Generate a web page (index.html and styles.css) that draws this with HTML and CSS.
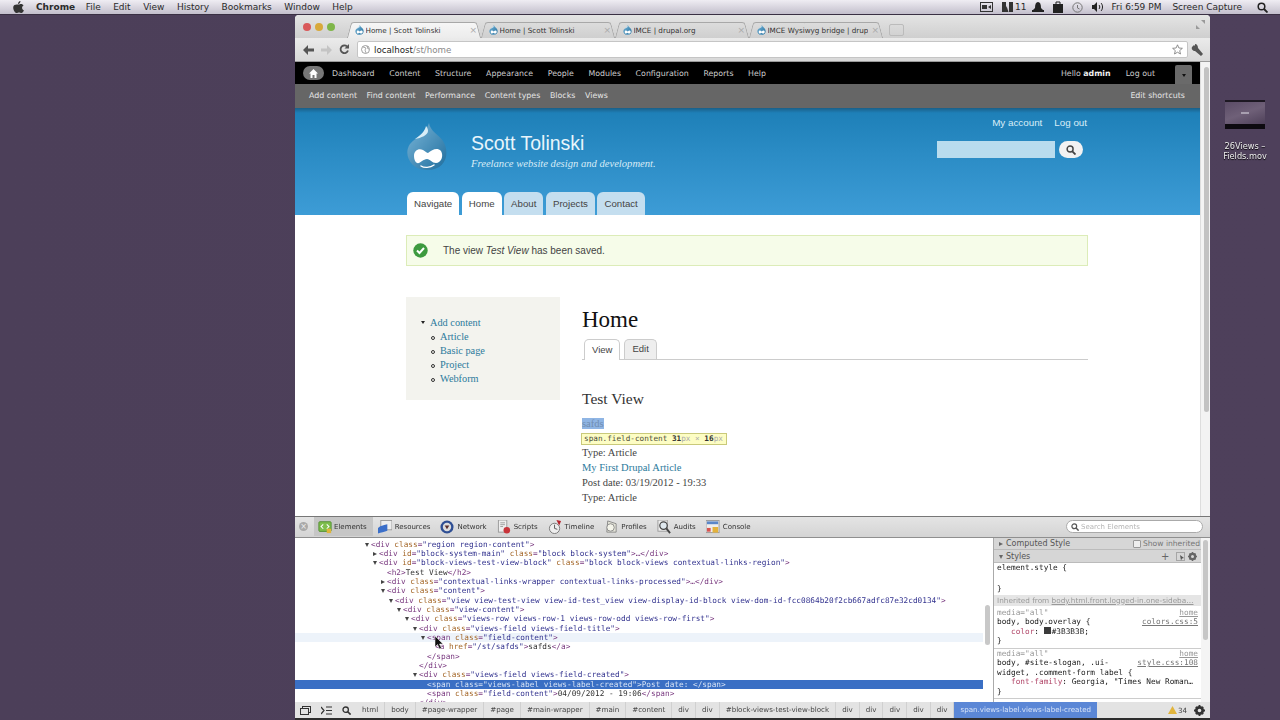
FILE: index.html
```html
<!DOCTYPE html>
<html lang="en">
<head>
  <meta charset="UTF-8" />
  <title>Home | Scott Tolinski</title>
  <link rel="stylesheet" href="styles.css">
</head>
<body>

<svg class="defs" width="0" height="0">
  <defs>
    <linearGradient id="dropFill" x1="0" y1="0" x2="1" y2="1">
      <stop offset="0" stop-color="#7bb6d8"/>
      <stop offset="1" stop-color="#1f6e9e"/>
    </linearGradient>
    <symbol id="drop" viewBox="0 0 42 47">
      <path d="M23 0C24 8 33 12 37 18C44 29 41 47 21 47C4 47-3 31 4 21C10 14 20 10 23 0Z" fill="url(#dropFill)"/>
      <path d="M20 3C19 8 15 12 9 16C15 15 22 12 22 8C22 6 21 4 20 3Z" fill="#d8edf7"/>
      <path d="M8 33C8 27 13 25 17 27C20 29 21 30 22 30C26 27 31 24 35 28C38 33 35 40 30 40C26 40 24 36 21 36C17 36 14 41 11 40C9 39 8 36 8 33Z" fill="#fff"/>
      <path d="M15 43C18 45 24 45 28 42" fill="none" stroke="#fff" stroke-width="1.4" stroke-linecap="round"/>
    </symbol>
  </defs>
</svg>

<div class="menubar">
  <div class="menu-left">
    <svg class="apple" width="11" height="12" viewBox="0 0 22 24"><path d="M15 0c0 3-2 6-5 6 0-3 2-6 5-6zM11 7c2 0 3-1 5-1 2 0 4 1 5 3-4 2-4 8 1 10-2 3-3 5-5 5s-3-1-5-1-3 1-5 1C3 24-3 12 3 8c3-2 6-1 8-1z" fill="#333"/></svg>
    <b>Chrome</b>
    <span>File</span>
    <span>Edit</span>
    <span>View</span>
    <span>History</span>
    <span>Bookmarks</span>
    <span>Window</span>
    <span>Help</span>
  </div>
  <div class="menu-right">
    <svg width="13" height="10" viewBox="0 0 13 10"><rect x=".5" y=".5" width="12" height="9" fill="none" stroke="#333"/><rect x="2" y="3" width="5" height="4" fill="#333"/><path d="M8 5l3-2v4z" fill="#333"/></svg>
    <span class="adobe"><svg width="11" height="10" viewBox="0 0 11 10"><path d="M0 0h4v10H0zM7 0h4v10H7zM4.500 4l2 6H3z" fill="#333"/></svg>11</span>
    <svg width="12" height="10" viewBox="0 0 12 10"><path d="M3 6C3 2 4 0 6 0s3 2 3 6l2 2H1z" fill="#222"/><rect x="0" y="8" width="12" height="2" fill="#222"/></svg>
    <svg width="10" height="12" viewBox="0 0 10 12"><rect x="0" y="3" width="10" height="9" fill="#222"/><path d="M3 3V1h4v2" fill="none" stroke="#222"/></svg>
    <svg width="11" height="11" viewBox="0 0 11 11"><circle cx="5.500" cy="5.500" r="4.700" fill="none" stroke="#777"/><path d="M5.500 3v3l2 1" fill="none" stroke="#777"/></svg>
    <svg width="12" height="10" viewBox="0 0 12 10"><path d="M0 3h2l3-3v10L2 7H0z" fill="#222"/><path d="M7 3c1 1 1 3 0 4M9 1c2 2 2 6 0 8" fill="none" stroke="#222"/></svg>
    <span class="clock">Fri 6:59 PM</span>
    <span class="capture">Screen Capture</span>
    <svg width="11" height="11" viewBox="0 0 11 11"><circle cx="4.500" cy="4.500" r="3.300" fill="none" stroke="#222" stroke-width="1.500"/><path d="M7 7l3.500 3.500" stroke="#222" stroke-width="1.800"/></svg>
  </div>
</div>

<div class="desktop-file">
  <div class="file-thumb"><div class="file-dot"></div></div>
  <div class="file-name">26Views –<br>Fields.mov</div>
</div>

<div class="window">
  <div class="tabstrip">
    <div class="lights">
      <i class="light red"></i><i class="light yellow"></i><i class="light green"></i>
    </div>
    <div class="tab tab-active"><svg class="favicon"><use href="#drop"/></svg><span class="tab-title">Home | Scott Tolinski</span><span class="tab-x">×</span></div>
    <div class="tab"><svg class="favicon"><use href="#drop"/></svg><span class="tab-title">Home | Scott Tolinski</span><span class="tab-x">×</span></div>
    <div class="tab"><svg class="favicon"><use href="#drop"/></svg><span class="tab-title">IMCE | drupal.org</span><span class="tab-x">×</span></div>
    <div class="tab"><svg class="favicon"><use href="#drop"/></svg><span class="tab-title">IMCE Wysiwyg bridge | drup</span><span class="tab-x">×</span></div>
    <div class="newtab"></div>
    <svg class="fullscreen" width="9" height="9" viewBox="0 0 9 9"><path d="M5 0h4v4zM0 5v4h4z" fill="#9a9a9a"/></svg>
  </div>

  <div class="urlbar">
    <svg class="nav-ico" width="11" height="10" viewBox="0 0 11 10"><path d="M5 0L0 5l5 5V6.500h6v-3H5z" fill="#555"/></svg>
    <svg class="nav-ico" width="11" height="10" viewBox="0 0 11 10"><path d="M6 0l5 5-5 5V6.500H0v-3h6z" fill="#c4c4c4"/></svg>
    <svg class="nav-ico" width="11" height="11" viewBox="0 0 11 11"><path d="M9 6.500A3.800 3.800 0 1 1 8 2.500" fill="none" stroke="#555" stroke-width="1.800"/><path d="M10 0v4.500H5.500z" fill="#555"/></svg>
    <div class="omnibox">
      <svg width="9" height="9" viewBox="0 0 9 9"><circle cx="4.500" cy="4.500" r="4" fill="none" stroke="#888" stroke-width=".8"/><path d="M2 2l3 1-1 2 1 3M6 1l1 3 1 0" fill="none" stroke="#888" stroke-width=".7"/></svg>
      <span class="url"><b>localhost</b>/st/home</span>
    </div>
    <svg class="star" width="11" height="11" viewBox="0 0 11 11"><path d="M5.500.8l1.400 3.200 3.500.3-2.700 2.300.8 3.400-3-1.800-3 1.800.8-3.400L.6 4.300l3.500-.3z" fill="#fff" stroke="#777" stroke-width=".8"/></svg>
    <svg class="wrench" width="12" height="12" viewBox="0 0 12 12"><path d="M1 3l2-2 1 1V0c2 0 3 2 3 4l5 6-2 2-6-5C2 7 0 5 1 3z" fill="#555"/></svg>
  </div>

  <div class="viewport">
    <div class="page">
      <div class="admin-bar">
        <div class="admin-left">
          <span class="home-btn"><svg width="9" height="9" viewBox="0 0 9 9"><path d="M4.500 0L9 4.500H7.500V9H5.500V6h-2v3h-2V4.500H0z" fill="#fff"/></svg></span>
          <a>Dashboard</a><a>Content</a><a>Structure</a><a>Appearance</a><a>People</a><a>Modules</a><a>Configuration</a><a>Reports</a><a>Help</a>
        </div>
        <div class="admin-right">
          <span>Hello <b>admin</b></span><a>Log out</a>
          <span class="toggle"><i></i></span>
        </div>
      </div>
      <div class="shortcuts">
        <div class="short-left"><a>Add content</a><a>Find content</a><a>Performance</a><a>Content types</a><a>Blocks</a><a>Views</a></div>
        <a>Edit shortcuts</a>
      </div>

      <div class="site-header">
        <div class="wrap header-inner">
          <div class="header-top">
            <div class="branding">
              <svg class="logo" width="42" height="47"><use href="#drop"/></svg>
              <div class="site-text">
                <div class="site-name">Scott Tolinski</div>
                <div class="site-slogan">Freelance website design and development.</div>
              </div>
            </div>
            <div class="header-right">
              <div class="secondary"><a>My account</a><a>Log out</a></div>
              <div class="search">
                <div class="search-input"></div>
                <div class="search-btn"><svg width="10" height="10" viewBox="0 0 11 11"><circle cx="4.500" cy="4.500" r="3.300" fill="none" stroke="#444" stroke-width="1.600"/><path d="M7 7l3.500 3.500" stroke="#444" stroke-width="2"/></svg></div>
              </div>
            </div>
          </div>
          <div class="main-menu">
            <a class="on">Navigate</a><a class="on">Home</a><a>About</a><a>Projects</a><a>Contact</a>
          </div>
        </div>
      </div>

      <div class="wrap">
        <div class="status">
          <svg width="15" height="15" viewBox="0 0 15 15"><circle cx="7.500" cy="7.500" r="7.200" fill="#3d9a3f"/><path d="M4 7.500l2.500 2.500 4.500-5" fill="none" stroke="#fff" stroke-width="2"/></svg>
          <span>The view <em>Test View</em> has been saved.</span>
        </div>
        <div class="columns">
          <div class="sidebar">
            <ul class="side-menu">
              <li><a>Add content</a>
                <ul>
                  <li><a>Article</a></li>
                  <li><a>Basic page</a></li>
                  <li><a>Project</a></li>
                  <li><a>Webform</a></li>
                </ul>
              </li>
            </ul>
          </div>
          <div class="content">
            <h1>Home</h1>
            <div class="local-tabs"><a class="on">View</a><a>Edit</a></div>
            <h2>Test View</h2>
            <div class="rows">
              <div class="row-hl"><a class="hl">safds</a></div>
              <div class="inspect-tip">span.field-content <b>31</b><i>px × </i><b>16</b><i>px</i></div>
              <div>&nbsp;</div>
              <div>Type: Article</div>
              <div><a>My First Drupal Article</a></div>
              <div>Post date: 03/19/2012 - 19:33</div>
              <div>Type: Article</div>
            </div>
          </div>
        </div>
      </div>
    </div>
    <div class="page-scroll"><div class="page-thumb"></div></div>
  </div>

  <div class="devtools">
    <div class="dt-toolbar">
      <span class="dt-close">×</span>
      <div class="dt-tab sel"><svg viewBox="0 0 16 14"><rect x="1" y="1" width="14" height="11" rx="1" fill="#7fbf4d" stroke="#4c8a2c"/><path d="M6 4L3.500 6.500 6 9M10 4l2.500 2.500L10 9" fill="none" stroke="#fff" stroke-width="1.200"/><rect x="10" y="9" width="5" height="5" fill="#e0b53a"/></svg><span>Elements</span></div>
      <div class="dt-tab"><svg viewBox="0 0 15 14"><rect x="3" y="0" width="12" height="10" fill="#eee" stroke="#999"/><path d="M0 8c3-3 7-3 10-4v7c-3 1-7 2-10 3z" fill="#3b6fc9"/></svg><span>Resources</span></div>
      <div class="dt-tab"><svg viewBox="0 0 15 15"><circle cx="7.500" cy="7.500" r="7" fill="#2f4f94"/><circle cx="7.500" cy="7.500" r="4.500" fill="#ddd"/><path d="M5 6h5l-2.500 4z" fill="#5a2f2f"/></svg><span>Network</span></div>
      <div class="dt-tab"><svg viewBox="0 0 14 15"><rect x="1" y="0" width="9" height="13" fill="#eee" stroke="#999"/><path d="M3 3h5M3 5h5M3 7h3" stroke="#888" stroke-width=".8"/><circle cx="10" cy="11" r="3.500" fill="#c8343a"/></svg><span>Scripts</span></div>
      <div class="dt-tab"><svg viewBox="0 0 15 15"><circle cx="7" cy="9" r="5.500" fill="#eee" stroke="#777"/><path d="M7 5v4l3 1" fill="none" stroke="#555"/><path d="M9 0l5 1-2 5z" fill="#b5232c"/></svg><span>Timeline</span></div>
      <div class="dt-tab"><svg viewBox="0 0 15 15"><path d="M4 1l9 3v9H3z" fill="#e6e6da" stroke="#888"/><circle cx="7" cy="8" r="4" fill="#f4f4ea" stroke="#888"/></svg><span>Profiles</span></div>
      <div class="dt-tab"><svg viewBox="0 0 15 15"><rect x="1" y="0" width="10" height="12" fill="#eee" stroke="#999"/><circle cx="7" cy="6" r="4" fill="#dfe8ee" stroke="#444" stroke-width="1.300"/><path d="M10 9l4 5" stroke="#444" stroke-width="2"/></svg><span>Audits</span></div>
      <div class="dt-tab"><svg viewBox="0 0 15 14"><rect x="0" y="0" width="14" height="13" fill="#eee" stroke="#999"/><rect x="1" y="1" width="12" height="3" fill="#5a86c8"/><rect x="7" y="7" width="6" height="6" fill="#e3b23c"/><rect x="1" y="8" width="4" height="4" fill="#d9534f"/></svg><span>Console</span></div>
      <div class="dt-search"><svg width="8" height="8" viewBox="0 0 11 11"><circle cx="4.500" cy="4.500" r="3.300" fill="none" stroke="#555" stroke-width="1.600"/><path d="M7 7l3.500 3.500" stroke="#555" stroke-width="2"/></svg><span>Search Elements</span></div>
    </div>

    <div class="dt-body">
      <div class="dom-tree">
        <div class="line l0 open"><u>&lt;div</u> <s>class</s><u>=</u><q>"region region-content"</q><u>&gt;</u></div>
        <div class="line l1 shut"><u>&lt;div</u> <s>id</s><u>=</u><q>"block-system-main"</q> <s>class</s><u>=</u><q>"block block-system"</q><u>&gt;…&lt;/div&gt;</u></div>
        <div class="line l1 open"><u>&lt;div</u> <s>id</s><u>=</u><q>"block-views-test-view-block"</q> <s>class</s><u>=</u><q>"block block-views contextual-links-region"</q><u>&gt;</u></div>
        <div class="line l2"><u>&lt;h2&gt;</u>Test View<u>&lt;/h2&gt;</u></div>
        <div class="line l2 shut"><u>&lt;div</u> <s>class</s><u>=</u><q>"contextual-links-wrapper contextual-links-processed"</q><u>&gt;…&lt;/div&gt;</u></div>
        <div class="line l2 open"><u>&lt;div</u> <s>class</s><u>=</u><q>"content"</q><u>&gt;</u></div>
        <div class="line l3 open"><u>&lt;div</u> <s>class</s><u>=</u><q>"view view-test-view view-id-test_view view-display-id-block view-dom-id-fcc0864b20f2cb667adfc87e32cd0134"</q><u>&gt;</u></div>
        <div class="line l4 open"><u>&lt;div</u> <s>class</s><u>=</u><q>"view-content"</q><u>&gt;</u></div>
        <div class="line l5 open"><u>&lt;div</u> <s>class</s><u>=</u><q>"views-row views-row-1 views-row-odd views-row-first"</q><u>&gt;</u></div>
        <div class="line l6 open"><u>&lt;div</u> <s>class</s><u>=</u><q>"views-field views-field-title"</q><u>&gt;</u></div>
        <div class="line l7 open hover"><u>&lt;span</u> <s>class</s><u>=</u><q>"field-content"</q><u>&gt;</u></div>
        <div class="line l8"><u>&lt;a</u> <s>href</s><u>=</u><q>"/st/safds"</q><u>&gt;</u>safds<u>&lt;/a&gt;</u></div>
        <div class="line l7"><u>&lt;/span&gt;</u></div>
        <div class="line l6"><u>&lt;/div&gt;</u></div>
        <div class="line l6 open"><u>&lt;div</u> <s>class</s><u>=</u><q>"views-field views-field-created"</q><u>&gt;</u></div>
        <div class="line l7 selected"><u>&lt;span</u> <s>class</s><u>=</u><q>"views-label views-label-created"</q><u>&gt;</u>Post date: <u>&lt;/span&gt;</u></div>
        <div class="line l7"><u>&lt;span</u> <s>class</s><u>=</u><q>"field-content"</q><u>&gt;</u>04/09/2012 - 19:06<u>&lt;/span&gt;</u></div>
        <div class="line l6"><u>&lt;/div&gt;</u></div>
        <svg class="cursor" width="9" height="13" viewBox="0 0 9 13"><path d="M0 0v11l2.500-2.500L4.500 13l2-1-2-4H8z" fill="#111" stroke="#fff" stroke-width=".5"/></svg>
      </div>
      <div class="tree-scroll"><div class="tree-thumb"></div></div>
      <div class="styles-pane">
        <div class="pane-head computed"><span class="arrow-r"></span>Computed Style<label><i></i>Show inherited</label></div>
        <div class="pane-head stylesh"><span class="arrow-d"></span>Styles<span class="head-tools">+ &nbsp;<svg width="9" height="9" viewBox="0 0 9 9"><rect x=".5" y=".5" width="8" height="8" fill="none" stroke="#777" stroke-dasharray="1 1"/><path d="M4 3l4 3-2 .5-1 2z" fill="#555"/></svg> &nbsp;<svg width="9" height="9" viewBox="0 0 24 24"><circle cx="12" cy="12" r="7" fill="none" stroke="#666" stroke-width="6"/><path d="M12 0v5M12 19v5M0 12h5M19 12h5M4 4l3 3M17 17l3 3M20 4l-3 3M7 17l-3 3" stroke="#666" stroke-width="4"/></svg></span></div>
        <div class="rule first">
          <div class="sel-line">element.style {</div>
          <div>&nbsp;</div>
          <div>}</div>
        </div>
        <div class="inherited">Inherited from <span>body.html.front.logged-in.one-sideba…</span></div>
        <div class="rule">
          <div class="media"><span>media="all"</span><span class="src-link">home</span></div>
          <div class="sel-line"><span>body, body.overlay {</span><span class="src-link">colors.css:5</span></div>
          <div class="decl"><s>color</s>: <i class="swatch"></i>#3B3B3B;</div>
          <div>}</div>
        </div>
        <div class="rule">
          <div class="media"><span>media="all"</span><span class="src-link">home</span></div>
          <div class="sel-line"><span>body, #site-slogan, .ui-</span><span class="src-link">style.css:108</span></div>
          <div>widget, .comment-form label {</div>
          <div class="decl"><s>font-family</s>: Georgia, "Times New Roman…</div>
          <div>}</div>
        </div>
      </div>
      <div class="pane-scroll"><div class="pane-thumb"></div></div>
    </div>

    <div class="crumbs">
      <svg class="crumb-ico" width="11" height="9" viewBox="0 0 11 9"><rect x="2.500" y=".5" width="8" height="6" fill="none" stroke="#333"/><rect x=".5" y="2.500" width="8" height="6" fill="#e3e3e3" stroke="#333"/></svg>
      <svg class="crumb-ico" width="11" height="9" viewBox="0 0 11 9"><path d="M0 1l3 3.500L0 8M5 1h6M5 4.500h6M5 8h6" fill="none" stroke="#333" stroke-width="1.200"/></svg>
      <svg class="crumb-ico" width="9" height="9" viewBox="0 0 11 11"><circle cx="4.500" cy="4.500" r="3.300" fill="none" stroke="#333" stroke-width="1.600"/><path d="M7 7l3.500 3.500" stroke="#333" stroke-width="2"/></svg>
      <div class="crumb-list">
        <span>html</span><span>body</span><span>#page-wrapper</span><span>#page</span><span>#main-wrapper</span><span>#main</span><span>#content</span><span>div</span><span>div</span><span>#block-views-test-view-block</span><span>div</span><span>div</span><span>div</span><span>div</span><span>div</span><span class="cur">span.views-label.views-label-created</span>
      </div>
      <div class="crumb-end">
        <svg width="9" height="8" viewBox="0 0 9 8"><path d="M4.500 0L9 8H0z" fill="#e2b53c"/></svg><span>34</span>
        <svg class="gear" width="11" height="11" viewBox="0 0 24 24"><circle cx="12" cy="12" r="7" fill="none" stroke="#333" stroke-width="6"/><path d="M12 0v5M12 19v5M0 12h5M19 12h5M4 4l3 3M17 17l3 3M20 4l-3 3M7 17l-3 3" stroke="#333" stroke-width="4"/></svg>
      </div>
    </div>
  </div>
</div>

</body>
</html>
```

FILE: styles.css
```css
html, body {
  margin: 0;
  height: 720px;
  overflow: hidden;
}

body {
  position: relative;
  background: linear-gradient(90deg, #4c3f59, #4e405b);
  font-family: "DejaVu Sans", sans-serif;
  filter: blur(0.4px);
}

.defs {
  position: absolute;
}

a {
  cursor: pointer;
}

/* mac menu bar */
.menubar {
  height: 14px;
  display: flex;
  justify-content: space-between;
  align-items: center;
  background: linear-gradient(#efedf3, #c3bfcc);
  border-bottom: 1px solid #3a3044;
  font-size: 9px;
  color: #2a2a2a;
}

.menu-left {
  display: flex;
  align-items: center;
  padding-left: 13px;
}

.menu-left b {
  margin-left: 12px;
  margin-right: 10.5px;
}

.menu-left span {
  margin-right: 12.5px;
}

.apple {
  flex: none;
}

.menu-right {
  display: flex;
  align-items: center;
  gap: 9px;
  padding-right: 12px;
}

.adobe {
  display: flex;
  align-items: center;
  gap: 2px;
  margin-right: -4px;
}

.clock {
  margin-left: -1px;
}

.capture {
  margin: 0 6px 0 2px;
}

/* desktop */
.desktop-file {
  position: absolute;
  left: 1215px;
  top: 100px;
  width: 60px;
  text-align: center;
  color: #eee;
  font-size: 8.2px;
  line-height: 10px;
  text-shadow: 0 1px 1px #000;
}

.file-thumb {
  width: 40px;
  height: 29px;
  margin: 0 auto 12px;
  box-sizing: border-box;
  background: linear-gradient(160deg, #5b4c66, #6f6078 50%, #4e4059);
  border-top: 2px solid #1d1822;
  border-bottom: 5px solid #0d0a10;
  display: flex;
  align-items: center;
  justify-content: center;
}

.file-dot {
  width: 8px;
  height: 2px;
  background: #a89fb0;
}

/* browser window */
.window {
  position: absolute;
  left: 295px;
  top: 15px;
  width: 915px;
  height: 705px;
  overflow: hidden;
  border-radius: 4px 4px 0 0;
  display: flex;
  flex-direction: column;
  background: #fff;
}

.tabstrip {
  height: 23px;
  flex: none;
  display: flex;
  align-items: flex-end;
  background: linear-gradient(#e4e4e4, #cfcfcf);
  position: relative;
}

.lights {
  display: flex;
  gap: 4px;
  width: 52px;
  padding: 0 0 7px 8px;
  box-sizing: border-box;
  align-self: flex-end;
}

.light {
  width: 8px;
  height: 8px;
  border-radius: 50%;
}

.red { background: #d9595a; }
.yellow { background: #d8a93b; }
.green { background: #7fb649; }

.tab {
  width: 134px;
  height: 16px;
  flex: none;
  box-sizing: border-box;
  display: flex;
  align-items: center;
  padding: 0 4px 0 7.5px;
  font-size: 7.2px;
  color: #333;
  position: relative;
  isolation: isolate;
}

.tab::before,
.tab::after {
  content: "";
  position: absolute;
  top: 0;
  bottom: 0;
  width: 55%;
  z-index: -1;
  background: linear-gradient(#dcdcdc, #cfcfcf);
  border-top: 1px solid #a8a8a8;
}

.tab::before {
  left: 2px;
  border-left: 1px solid #a8a8a8;
  border-top-left-radius: 3px;
  transform: skewX(-15deg);
}

.tab::after {
  right: 2px;
  border-right: 1px solid #a8a8a8;
  border-top-right-radius: 3px;
  transform: skewX(15deg);
}

.tab-active::before,
.tab-active::after {
  background: linear-gradient(#f6f6f6, #ececec);
}

.favicon {
  width: 9px;
  height: 10px;
  flex: none;
  margin-right: 2px;
}

.tab-title {
  flex: 1;
  white-space: nowrap;
  overflow: hidden;
}

.tab-x {
  color: #aaa;
  font-size: 9px;
  margin-left: 3px;
}

.newtab {
  width: 13px;
  height: 10px;
  margin: 0 0 2px 6px;
  border: 1px solid #bbb;
  border-radius: 2px;
}

.fullscreen {
  position: absolute;
  right: 5px;
  top: 5px;
}

.urlbar {
  height: 24px;
  flex: none;
  box-sizing: border-box;
  display: flex;
  align-items: center;
  padding: 0 7px 0 8px;
  background: linear-gradient(#ebebeb, #d8d8d8);
  border-bottom: 1px solid #9a9a9a;
}

.nav-ico {
  margin-right: 7px;
  flex: none;
}

.omnibox {
  flex: 1;
  height: 15px;
  display: flex;
  align-items: center;
  gap: 4px;
  padding-left: 3px;
  background: #fff;
  border: 1px solid #c5c5c5;
  border-radius: 2px;
  font-size: 8.7px;
}

.url {
  color: #888;
}

.url b {
  font-weight: normal;
  color: #222;
}

.star {
  margin-left: -16px;
  position: relative;
  flex: none;
}

.wrench {
  margin-left: 8px;
  flex: none;
}

.viewport {
  height: 454px;
  flex: none;
  display: flex;
  overflow: hidden;
}

.page {
  width: 905px;
  flex: none;
  overflow: hidden;
  background: #fff;
}

.page-scroll {
  width: 10px;
  padding: 5px 1px 0 8px;
  box-sizing: border-box;
  background: #f3f3f3;
  border-left: 1px solid #ddd;
}

.page-thumb {
  width: 5px;
  margin-left: -5px;
  height: 345px;
  border-radius: 3px;
  background: #c2c2c2;
}

/* drupal admin toolbar */
.admin-bar {
  height: 22px;
  box-sizing: border-box;
  display: flex;
  justify-content: space-between;
  align-items: center;
  padding: 0 8px;
  background: #000;
  font-size: 7.85px;
  color: #ccc;
}

.admin-left,
.admin-right {
  display: flex;
  align-items: center;
}

.home-btn {
  width: 21px;
  height: 14px;
  border-radius: 7px;
  background: #777;
  display: flex;
  align-items: center;
  justify-content: center;
  margin-right: 8px;
}

.admin-left a {
  margin-right: 14.6px;
}

.admin-right b {
  color: #eee;
}

.admin-right a {
  margin: 0 20px 0 15px;
}

.toggle {
  width: 17px;
  height: 19px;
  margin-top: 3px;
  border-radius: 2px 2px 0 0;
  background: #6a6a6a;
  display: flex;
  align-items: center;
  justify-content: center;
}

.toggle i {
  border: 2.5px solid transparent;
  border-top: 3px solid #111;
  margin-top: 3px;
}

.shortcuts {
  height: 24px;
  box-sizing: border-box;
  display: flex;
  justify-content: space-between;
  align-items: center;
  padding: 0 15px 1px 14px;
  background: #666;
  font-size: 7.9px;
  color: #e4e4e4;
}

.short-left a {
  margin-right: 9.6px;
}

/* theme header */
.wrap {
  width: 682px;
  margin-left: 111px;
}

.site-header {
  height: 107px;
  background: linear-gradient(#1a5f88 0, #1e80b8 5px, #2a8bc4 40%, #3d9cd6);
}

.header-inner {
  height: 107px;
  display: flex;
  flex-direction: column;
  justify-content: space-between;
}

.header-top {
  display: flex;
  justify-content: space-between;
  padding-top: 14px;
}

.branding {
  display: flex;
  align-items: flex-start;
}

.logo {
  margin-top: 1px;
}

.site-text {
  margin-left: 23px;
  padding-top: 9px;
  color: #fff;
}

.site-name {
  font-family: "Liberation Sans", sans-serif;
  font-size: 19.5px;
  line-height: 24px;
  color: #e8f5fb;
}

.site-slogan {
  font-family: "Liberation Serif", serif;
  font-style: italic;
  font-size: 10.6px;
  line-height: 15px;
  margin-top: 1px;
  color: #d8ecf7;
}

.header-right {
  display: flex;
  flex-direction: column;
  align-items: flex-end;
}

.secondary {
  font-family: "Liberation Sans", sans-serif;
  font-size: 9.8px;
  line-height: 13px;
  color: #dbeef8;
  display: flex;
  gap: 12px;
  padding-right: 1px;
  margin-top: -6px;
}

.search {
  display: flex;
  gap: 4px;
  margin: 12px 5px 0 0;
}

.search-input {
  width: 118px;
  height: 17px;
  background: #b9dcee;
}

.search-btn {
  width: 24px;
  height: 17px;
  border-radius: 9px;
  background: #f2f2f2;
  display: flex;
  align-items: center;
  justify-content: center;
}

.main-menu {
  display: flex;
  gap: 2.5px;
  padding-left: 1px;
}

.main-menu a {
  height: 23px;
  box-sizing: border-box;
  padding: 0 7px;
  display: flex;
  align-items: center;
  border-radius: 6px 6px 0 0;
  background: #c4deef;
  color: #444;
  font-family: "Liberation Sans", sans-serif;
  font-size: 9.7px;
}

.main-menu a.on {
  background: #fff;
}

/* content area */
.status {
  margin-top: 20px;
  height: 31px;
  box-sizing: border-box;
  display: flex;
  align-items: center;
  gap: 15px;
  padding-left: 6px;
  background: #f6fce9;
  border: 1px solid #dcecb8;
  font-family: "Liberation Sans", sans-serif;
  font-size: 10px;
  color: #444;
}

.columns {
  display: flex;
  gap: 22px;
  margin-top: 31px;
  align-items: flex-start;
}

.sidebar {
  width: 154px;
  height: 103px;
  flex: none;
  box-sizing: border-box;
  padding: 19px 0 0 16px;
  background: #f3f3ee;
  font-family: "Liberation Serif", serif;
  font-size: 10.3px;
  line-height: 14px;
  color: #2b7a9c;
}

.side-menu,
.side-menu ul {
  list-style: none;
  margin: 0;
  padding: 0;
}

.side-menu > li {
  padding-left: 8px;
  position: relative;
}

.side-menu > li::before {
  content: "";
  position: absolute;
  left: -1px;
  top: 5px;
  border: 2.5px solid transparent;
  border-top: 3px solid #222;
}

.side-menu ul li {
  padding-left: 10px;
  position: relative;
}

.side-menu ul li::before {
  content: "";
  position: absolute;
  left: 1px;
  top: 6px;
  width: 2px;
  height: 2px;
  border: 1px solid #333;
  border-radius: 50%;
}

.content {
  flex: 1;
  font-family: "Liberation Serif", serif;
  font-size: 10.5px;
  line-height: 14.7px;
  color: #444;
}

.content a {
  color: #2b7a9c;
}

h1 {
  margin: 9px 0 0;
  font-size: 23px;
  line-height: 27px;
  font-weight: normal;
  color: #111;
}

.local-tabs {
  display: flex;
  gap: 4px;
  margin-top: 6px;
  padding-left: 2px;
  height: 21px;
  box-sizing: border-box;
  border-bottom: 1px solid #ccc;
  font-family: "Liberation Sans", sans-serif;
  font-size: 9.5px;
}

.local-tabs a {
  height: 20px;
  box-sizing: border-box;
  padding: 0 7px;
  display: flex;
  align-items: center;
  border: 1px solid #ccc;
  border-bottom: none;
  border-radius: 5px 5px 0 0;
  background: #eee;
  color: #444;
}

.local-tabs a.on {
  background: #fff;
  height: 21px;
}

h2 {
  margin: 23px 0 0;
  font-size: 15.5px;
  line-height: 32px;
  font-weight: normal;
  color: #333;
}

.rows {
  position: relative;
  margin-top: 2px;
}

.hl {
  background: #8fb5e4;
  color: #6f8db0 !important;
}

.inspect-tip {
  position: absolute;
  left: -1px;
  top: 16px;
  height: 12px;
  width: 146px;
  box-sizing: border-box;
  padding-left: 2px;
  background: #fdfdc4;
  border: 1px solid #c9c97a;
  font-family: "DejaVu Sans Mono", monospace;
  font-size: 7.7px;
  line-height: 10px;
  color: #4f4f3a;
  white-space: nowrap;
}

.inspect-tip b {
  color: #333;
}

.inspect-tip i {
  font-style: normal;
  color: #aaa;
}

/* web inspector */
.devtools {
  flex: 1;
  display: flex;
  flex-direction: column;
  min-height: 0;
  border-top: 1px solid #777;
}

.dt-toolbar {
  height: 21px;
  flex: none;
  box-sizing: border-box;
  display: flex;
  align-items: center;
  padding-bottom: 1px;
  background: linear-gradient(#e4e4e4, #d4d4d4);
  border-bottom: 1px solid #8f8f8f;
  font-size: 7px;
  color: #333;
  position: relative;
}

.dt-close {
  width: 9px;
  height: 9px;
  margin: 0 6px 0 4px;
  border-radius: 50%;
  background: #a9a9a9;
  color: #eee;
  font-size: 8px;
  line-height: 9px;
  text-align: center;
  flex: none;
}

.dt-tab {
  display: flex;
  align-items: center;
  gap: 3px;
  height: 19px;
  padding: 0 5px;
  white-space: nowrap;
}

.dt-tab svg {
  width: 14px;
  height: 14px;
  flex: none;
}

.dt-tab.sel {
  background: #c6c6c6;
  padding: 0 6px 0 4px;
  gap: 2px;
}

.dt-search {
  position: absolute;
  right: 7px;
  top: 3px;
  width: 137px;
  height: 13px;
  box-sizing: border-box;
  display: flex;
  align-items: center;
  gap: 2px;
  padding-left: 4px;
  background: #fff;
  border: 1px solid #aaa;
  border-radius: 7px;
  color: #b4b4b4;
  font-size: 7px;
}

.dt-body {
  height: 164px;
  flex: none;
  display: flex;
  overflow: hidden;
  background: #fff;
}

.dom-tree {
  width: 688px;
  flex: none;
  position: relative;
  padding-top: 1.7px;
  font-family: "DejaVu Sans Mono", monospace;
  font-size: 7.75px;
  line-height: 9.33px;
  color: #333;
  overflow: hidden;
  white-space: nowrap;
}

.line {
  height: 9.33px;
  position: relative;
}

.line u { color: #7a3a80; text-decoration: none; }
.line s { color: #a5682a; text-decoration: none; }
.line q { color: #33338f; quotes: none; }

.l0 { padding-left: 76px; }
.l1 { padding-left: 84px; }
.l2 { padding-left: 92px; }
.l3 { padding-left: 100px; }
.l4 { padding-left: 108px; }
.l5 { padding-left: 116px; }
.l6 { padding-left: 124px; }
.l7 { padding-left: 132px; }
.l8 { padding-left: 140px; }

.open::before,
.shut::before {
  content: "";
  position: absolute;
  margin-left: -6px;
  top: 3px;
}

.open::before {
  border: 2.5px solid transparent;
  border-top: 4px solid #444;
  border-bottom: none;
}

.shut::before {
  border: 2.5px solid transparent;
  border-left: 4px solid #444;
  border-right: none;
}

.hover {
  background: #edf3fa;
}

.selected {
  background: #3a6fc4;
}

.selected,
.selected u,
.selected s,
.selected q {
  color: #d5e2f5;
}

.cursor {
  position: absolute;
  left: 140px;
  top: 98px;
}

.tree-scroll {
  width: 10px;
  flex: none;
  background: #fff;
  padding-left: 2px;
  box-sizing: border-box;
}

.tree-thumb {
  width: 5px;
  height: 40px;
  margin-top: 67px;
  border-radius: 3px;
  background: #c8c8c8;
}

.styles-pane {
  width: 207px;
  flex: none;
  border-left: 1px solid #aaa;
  font-family: "DejaVu Sans Mono", monospace;
  font-size: 7.75px;
  line-height: 9.5px;
  color: #222;
  overflow: hidden;
}

.pane-head {
  display: flex;
  align-items: center;
  padding-left: 5px;
  background: #d6d6d6;
  border-bottom: 1px solid #bbb;
  font-family: "DejaVu Sans", sans-serif;
  font-size: 8px;
  color: #555;
  box-sizing: border-box;
}

.computed {
  height: 12px;
}

.computed label {
  margin-left: auto;
  display: flex;
  align-items: center;
  gap: 2px;
  font-size: 7.6px;
  color: #777;
  padding-right: 1px;
}

.computed label i {
  width: 6px;
  height: 6px;
  border: 1px solid #999;
  background: #eee;
  border-radius: 1px;
}

.stylesh {
  height: 13px;
  padding-top: 1px;
}

.arrow-r {
  border: 2.5px solid transparent;
  border-left: 4px solid #666;
  border-right: none;
  margin-right: 3px;
}

.arrow-d {
  border: 2.5px solid transparent;
  border-top: 4px solid #666;
  border-bottom: none;
  margin-right: 3px;
}

.head-tools {
  margin-left: auto;
  padding-right: 4px;
  display: flex;
  align-items: center;
  color: #666;
  font-size: 10px;
  line-height: 10px;
}

.rule {
  padding: 0 3px 2px;
  border-bottom: 1px solid #ccc;
}

.rule.first {
  border-bottom: none;
  padding-bottom: 0;
  line-height: 10.5px;
}

.media,
.sel-line {
  display: flex;
  justify-content: space-between;
}

.media {
  color: #999;
}

.src-link {
  color: #777;
  text-decoration: underline;
}

.media .src-link {
  color: #999;
}

.decl {
  padding-left: 14px;
  white-space: nowrap;
}

.decl s {
  color: #b2486a;
  text-decoration: none;
}

.swatch {
  display: inline-block;
  width: 7px;
  height: 7px;
  background: #3b3b3b;
  margin-right: 1px;
}

.inherited {
  height: 11px;
  margin-bottom: 2px;
  padding-left: 3px;
  background: #e5e5e5;
  font-family: "DejaVu Sans", sans-serif;
  font-size: 7.3px;
  line-height: 11px;
  color: #999;
  white-space: nowrap;
  overflow: hidden;
}

.inherited span {
  text-decoration: underline;
}

.pane-scroll {
  flex: 1;
  padding-left: 2px;
  background: #f4f4f4;
}

.pane-thumb {
  width: 5px;
  height: 100px;
  margin-top: 2px;
  border-radius: 3px;
  background: #c6c6c6;
}

.crumbs {
  height: 16px;
  flex: none;
  display: flex;
  align-items: center;
  background: #e3e3e3;
  border-bottom: 2px solid #2d2d2d;
  font-size: 7.1px;
  color: #444;
  white-space: nowrap;
}

.crumb-ico {
  flex: none;
  margin-left: 5px;
  margin-right: 5px;
}

.crumb-list {
  display: flex;
  height: 16px;
  align-items: center;
}

.crumb-list span {
  padding: 0 6px;
  height: 16px;
  line-height: 16px;
  border-right: 1px solid #d0d0d0;
}

.crumb-list .cur {
  background: #5b87d6;
  color: #d8e4f8;
  border-right: none;
}

.crumb-end {
  margin-left: auto;
  display: flex;
  align-items: center;
  gap: 1px;
  padding-right: 5px;
}

.gear {
  margin-left: 6px;
}
```
